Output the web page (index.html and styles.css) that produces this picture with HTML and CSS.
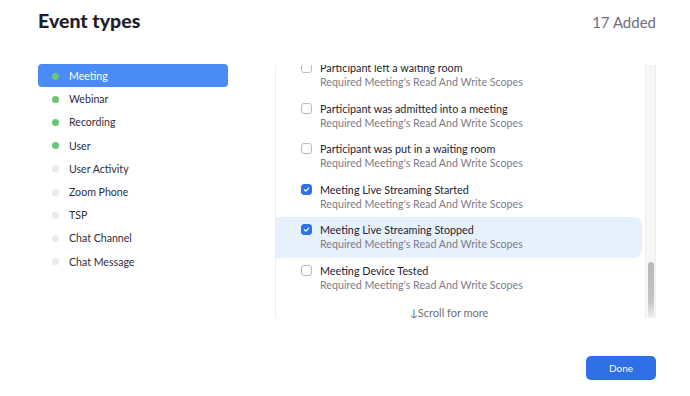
FILE: index.html
```html
<!DOCTYPE html>
<html lang="en">
<head>
  <meta charset="UTF-8">
  <meta name="viewport" content="width=device-width, initial-scale=1.0">
  <title>Event types</title>
  <link rel="stylesheet" href="styles.css">
</head>
<body>
  <div class="dialog">
    <div class="header">
      <h1>Event types</h1>
      <span class="count">17 Added</span>
    </div>

    <div class="body">
      <ul class="nav">
        <li class="active"><span class="dot on"></span>Meeting</li>
        <li><span class="dot on"></span>Webinar</li>
        <li><span class="dot on"></span>Recording</li>
        <li><span class="dot on"></span>User</li>
        <li><span class="dot"></span>User Activity</li>
        <li><span class="dot"></span>Zoom Phone</li>
        <li><span class="dot"></span>TSP</li>
        <li><span class="dot"></span>Chat Channel</li>
        <li><span class="dot"></span>Chat Message</li>
      </ul>

      <div class="events">
        <div class="list-wrap">
          <ul class="list">
            <li><span class="check"></span><div><div class="name">Participant left a waiting room</div><div class="scope">Required Meeting's Read And Write Scopes</div></div></li>
            <li><span class="check"></span><div><div class="name">Participant was admitted into a meeting</div><div class="scope">Required Meeting's Read And Write Scopes</div></div></li>
            <li><span class="check"></span><div><div class="name">Participant was put in a waiting room</div><div class="scope">Required Meeting's Read And Write Scopes</div></div></li>
            <li><span class="check checked"><svg viewBox="0 0 10 10"><path d="M2.6 5.2 L4.3 6.8 L7.5 3.4" /></svg></span><div><div class="name">Meeting Live Streaming Started</div><div class="scope">Required Meeting's Read And Write Scopes</div></div></li>
            <li class="hover"><span class="check checked"><svg viewBox="0 0 10 10"><path d="M2.6 5.2 L4.3 6.8 L7.5 3.4" /></svg></span><div><div class="name">Meeting Live Streaming Stopped</div><div class="scope">Required Meeting's Read And Write Scopes</div></div></li>
            <li><span class="check"></span><div><div class="name">Meeting Device Tested</div><div class="scope">Required Meeting's Read And Write Scopes</div></div></li>
          </ul>
          <div class="more">&darr;Scroll for more</div>
        </div>
        <div class="track"><div class="thumb"></div></div>
      </div>
    </div>

    <div class="footer">
      <button class="done">Done</button>
    </div>
  </div>
</body>
</html>
```

FILE: styles.css
```css
* { box-sizing: border-box; }
body {
  margin: 0;
  font-family: Lato, 'Open Sans', sans-serif;
  background: #fff;
  color: #232333;
}
.dialog {
  width: 690px;
  height: 396px;
  padding: 0 34px 0 38px;
  display: flex;
  flex-direction: column;
}
.header {
  display: flex;
  justify-content: space-between;
  align-items: baseline;
  height: 62px;
  padding-top: 9px;
}
.header h1 {
  margin: 0;
  font-size: 19.5px;
  font-weight: 900;
  color: #1e1e30;
}
.count {
  font-size: 15px;
  color: #6e6e80;
}
.body {
  display: flex;
  height: 258px;
}
.nav {
  list-style: none;
  margin: 2px 0 0;
  padding: 0;
  width: 237px;
}
.nav li {
  display: flex;
  align-items: center;
  width: 190px;
  height: 23.2px;
  padding: 1px 0 0 14px;
  font-size: 10.6px;
  color: #2e2e3c;
  border-radius: 4px;
}
.nav li.active {
  background: #4a8bf5;
  color: #fff;
}
.dot {
  width: 7px;
  height: 7px;
  border-radius: 50%;
  background: #e9e9ef;
  margin-right: 10px;
}
.dot.on { background: #6cc476; }
.events {
  flex: 1;
  display: flex;
  border-left: 1px solid #ececf2;
  margin-top: 3px;
  height: 253px;
}
.list-wrap {
  flex: 1;
  overflow: hidden;
  display: flex;
  flex-direction: column;
}
.list {
  list-style: none;
  margin: -10px 0 0;
  padding: 0;
}
.list li {
  display: flex;
  align-items: flex-start;
  height: 40.6px;
  padding: 6px 0 0 25px;
  border-radius: 0 8px 8px 0;
}
.list li.hover { background: #e7f1fc; }
.check {
  flex: none;
  width: 11px;
  height: 11px;
  margin: 1px 8px 0 0;
  border: 1px solid #b9b9c5;
  border-radius: 3px;
  background: #fff;
}
.check.checked {
  background: #2e72e8;
  border-color: #2e72e8;
}
.check svg {
  display: block;
  width: 9px;
  height: 9px;
  fill: none;
  stroke: #fff;
  stroke-width: 1.4;
  stroke-linecap: round;
  stroke-linejoin: round;
}
.name {
  font-size: 10.8px;
  line-height: 13px;
  color: #232333;
}
.scope {
  font-size: 10.7px;
  line-height: 15px;
  color: #7c7c8c;
}
.more {
  margin-top: 7px;
  padding-right: 20px;
  text-align: center;
  font-size: 11px;
  color: #6e6e7e;
}
.track {
  flex: none;
  width: 11px;
  margin-left: 3px;
  background: #f7f7f7;
  border-left: 1px solid #eee;
  border-right: 1px solid #eee;
  display: flex;
  flex-direction: column;
  justify-content: flex-end;
  align-items: center;
}
.thumb {
  width: 6px;
  height: 56px;
  border-radius: 3px 3px 0 0;
  background: linear-gradient(#b8b8b8, #c4c4c4 70%, #f0f0f0);
}
.footer {
  display: flex;
  justify-content: flex-end;
  padding-top: 36px;
}
.done {
  width: 70px;
  height: 24px;
  border: none;
  border-radius: 5px;
  background: #2e6fe6;
  color: #fff;
  font-family: Lato, sans-serif;
  font-size: 10px;
  cursor: pointer;
}
```
